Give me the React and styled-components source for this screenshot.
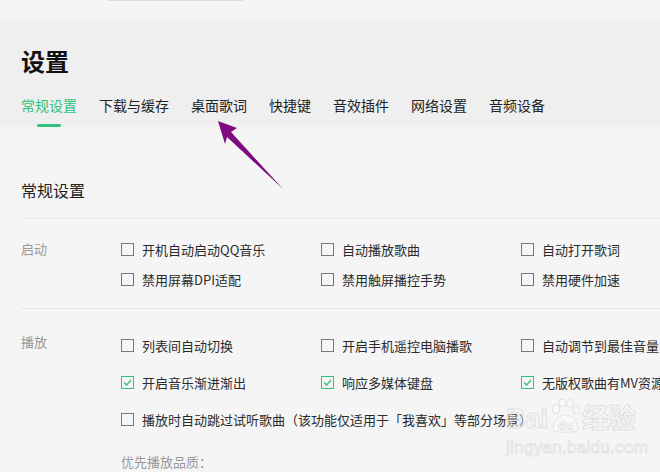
import styled, { createGlobalStyle } from "styled-components";

const GlobalStyle = createGlobalStyle`
  html, body {
    margin: 0;
    padding: 0;
    background: #f5f5f5;
    overflow: hidden;
  }
  body {
    font-family: "Noto Sans CJK SC", "Noto Sans", sans-serif;
    color: #333;
  }
`;

const Page = styled.div`
  position: relative;
  width: 660px;
  height: 472px;
  overflow: hidden;
  display: flex;
  flex-direction: column;
`;

const TopBar = styled.div`
  height: 22px;
  background: #f5f5f5;
  padding-left: 108px;
`;

const SearchEdge = styled.div`
  width: 135px;
  height: 1px;
  background: #dcdcdc;
`;

const Header = styled.div`
  background: #efefef;
  height: 106px;
  padding-left: 21px;
  display: flex;
  flex-direction: column;
`;

const Title = styled.h1`
  margin: 26px 0 0;
  font-size: 24px;
  line-height: 28px;
  font-weight: 700;
  color: #111;
`;

const Tabs = styled.div`
  display: flex;
  gap: 22px;
  margin-top: 14px;
`;

const Tab = styled.div`
  font-size: 14px;
  line-height: 20px;
  height: 38px;
  padding-top: 6px;
  box-sizing: border-box;
  color: ${(p) => (p.active ? "#31c27c" : "#222")};
  white-space: nowrap;
  display: flex;
  flex-direction: column;
  align-items: center;

  &::after {
    content: "";
    display: ${(p) => (p.active ? "block" : "none")};
    width: 24px;
    height: 3px;
    border-radius: 2px;
    background: #31c27c;
    margin-top: 9px;
  }
`;

const Content = styled.div`
  padding-left: 21px;
`;

const SectionTitle = styled.h2`
  margin: 52px 0 0;
  font-size: 16px;
  font-weight: 400;
  line-height: 22px;
  color: #222;
  padding-bottom: 17px;
  border-bottom: 1px solid #e6e6e6;
`;

const Group = styled.div`
  display: flex;
  padding: ${(p) => p.pad};
  border-bottom: ${(p) => (p.last ? "none" : "1px solid #e6e6e6")};
`;

const GroupLabel = styled.div`
  width: 100px;
  flex-shrink: 0;
  font-size: 13px;
  line-height: 20px;
  color: #999;
  margin-top: ${(p) => p.shift || 0}px;
`;

const Options = styled.div`
  display: grid;
  grid-template-columns: 200px 200px 200px;
  row-gap: ${(p) => p.gap}px;
`;

const Option = styled.label`
  display: flex;
  align-items: center;
  height: 20px;
  font-size: 13px;
  color: #2b2b2b;
  white-space: nowrap;
  grid-column: ${(p) => (p.wide ? "1 / span 3" : "auto")};
`;

const Box = styled.span`
  width: 11px;
  height: 11px;
  border: 1px solid ${(p) => (p.checked ? "#31c27c" : "#777")};
  margin-right: 8px;
  display: flex;
  align-items: center;
  justify-content: center;
  flex-shrink: 0;
`;

const SubLabel = styled.div`
  grid-column: 1 / span 3;
  font-size: 13px;
  line-height: 20px;
  color: #999;
  margin-top: 6px;
`;

const Arrow = styled.svg`
  position: absolute;
  left: 0;
  top: 0;
  pointer-events: none;
`;

const Watermark = styled.div`
  position: absolute;
  left: 506px;
  top: 398px;
  display: flex;
  flex-direction: column;
  align-items: flex-start;
  pointer-events: none;
  opacity: 0.75;
`;

const MarkLogo = styled.div`
  display: flex;
  align-items: flex-end;
  font-family: "Liberation Sans", "Noto Sans CJK SC", sans-serif;
  font-weight: 700;
  font-size: 27px;
  line-height: 30px;
  color: rgba(255, 255, 255, 0.45);
  -webkit-text-stroke: 1px #dadada;
  gap: 2px;
`;

const MarkUrl = styled.div`
  font-family: "Liberation Sans", sans-serif;
  font-size: 17px;
  letter-spacing: 0.3px;
  color: rgba(255, 255, 255, 0.45);
  -webkit-text-stroke: 0.8px #dadada;
  margin-top: 4px;
`;

const Check = () => (
  <svg width="9" height="7" viewBox="0 0 9 7">
    <path d="M1 3.5 L3.5 6 L8 1" fill="none" stroke="#31c27c" strokeWidth="1.3" />
  </svg>
);

const CheckOption = ({ checked, wide, children }) => (
  <Option wide={wide}>
    <Box checked={checked}>{checked && <Check />}</Box>
    {children}
  </Option>
);

const tabs = ["常规设置", "下载与缓存", "桌面歌词", "快捷键", "音效插件", "网络设置", "音频设备"];

export default function App() {
  return (
    <Page>
      <GlobalStyle />
      <TopBar>
        <SearchEdge />
      </TopBar>
      <Header>
        <Title>设置</Title>
        <Tabs>
          {tabs.map((t, i) => (
            <Tab key={t} active={i === 0}>
              {t}
            </Tab>
          ))}
        </Tabs>
      </Header>
      <Content>
        <SectionTitle>常规设置</SectionTitle>
        <Group pad="20px 0 19px">
          <GroupLabel>启动</GroupLabel>
          <Options gap={10}>
            <CheckOption>开机自动启动QQ音乐</CheckOption>
            <CheckOption>自动播放歌曲</CheckOption>
            <CheckOption>自动打开歌词</CheckOption>
            <CheckOption>禁用屏幕DPI适配</CheckOption>
            <CheckOption>禁用触屏播控手势</CheckOption>
            <CheckOption>禁用硬件加速</CheckOption>
          </Options>
        </Group>
        <Group pad="26px 0 0" last>
          <GroupLabel shift={-3}>播放</GroupLabel>
          <Options gap={17}>
            <CheckOption>列表间自动切换</CheckOption>
            <CheckOption>开启手机遥控电脑播歌</CheckOption>
            <CheckOption>自动调节到最佳音量</CheckOption>
            <CheckOption checked>开启音乐渐进渐出</CheckOption>
            <CheckOption checked>响应多媒体键盘</CheckOption>
            <CheckOption checked>无版权歌曲有MV资源</CheckOption>
            <CheckOption wide>播放时自动跳过试听歌曲（该功能仅适用于「我喜欢」等部分场景）</CheckOption>
            <SubLabel>优先播放品质：</SubLabel>
          </Options>
        </Group>
      </Content>
      <Watermark>
        <MarkLogo>
          <span>Bai</span>
          <svg width="30" height="36" viewBox="0 0 30 36">
            <g fill="rgba(255,255,255,0.45)" stroke="#dadada" strokeWidth="1">
              <ellipse cx="6" cy="11" rx="3.5" ry="4.5" />
              <ellipse cx="12.5" cy="5" rx="3.5" ry="4" />
              <ellipse cx="20" cy="5.5" rx="3.5" ry="4" />
              <ellipse cx="26" cy="12" rx="3" ry="3.5" />
              <path d="M3 32 C3 22 11 17 15 17 C21 17 28 23 28 32 C28 35 3 35 3 32 Z" />
            </g>
            <text x="15.5" y="32" textAnchor="middle" fontFamily="Liberation Sans, sans-serif" fontWeight="700" fontSize="13" fill="rgba(255,255,255,0.45)" stroke="#dadada" strokeWidth="0.7">du</text>
          </svg>
          <span>经验</span>
        </MarkLogo>
        <MarkUrl>jingyan.baidu.com</MarkUrl>
      </Watermark>
      <Arrow width="660" height="472" viewBox="0 0 660 472">
        <polygon
          points="218,121 237,128 231,132 283,189 227,137 225,144"
          fill="#7f0a80"
        />
      </Arrow>
    </Page>
  );
}
